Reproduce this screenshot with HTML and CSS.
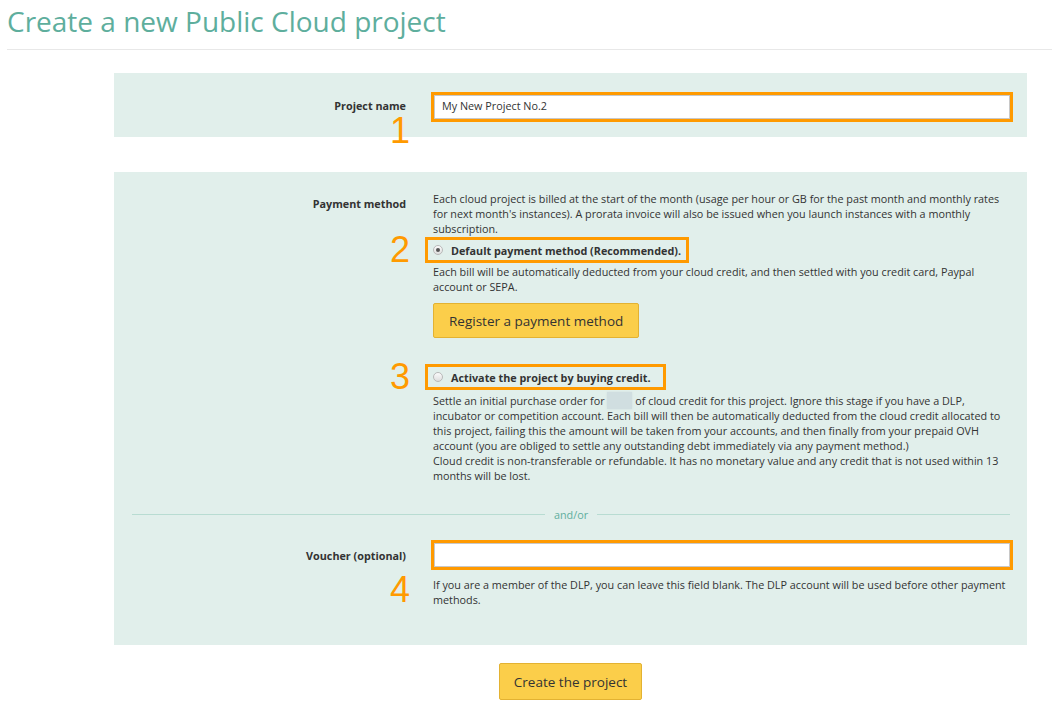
FILE: index.html
```html
<!DOCTYPE html>
<html lang="en">
<head>
<meta charset="utf-8">
<title>Create a new Public Cloud project</title>
<link rel="stylesheet" href="styles.css">
</head>
<body>
<div class="page">
  <h1 class="title">Create a new Public Cloud project</h1>
  <form class="form">
    <section class="panel panel-name">
      <div class="row row-name">
        <div class="label label-name">Project name<span class="step step-1">1</span></div>
        <div class="hl hl-input"><input class="input" type="text" value="My New Project No.2"></div>
      </div>
    </section>

    <section class="panel panel-pay">
      <div class="row">
        <div class="label label-pay">Payment method</div>
        <p class="text">Each cloud project is billed at the start of the month (usage per hour or GB for the past month and monthly rates for next month's instances). A prorata invoice will also be issued when you launch instances with a monthly subscription.</p>
      </div>

      <div class="row row-option">
        <div class="step">2</div>
        <label class="hl option"><span class="radio radio-on"></span>Default payment method (Recommended).</label>
      </div>

      <div class="row row-desc">
        <div class="col-2">
          <p class="text">Each bill will be automatically deducted from your cloud credit, and then settled with you credit card, Paypal account or SEPA.</p>
          <button type="button" class="btn btn-register">Register a payment method</button>
        </div>
      </div>

      <div class="row row-option row-option-3">
        <div class="step">3</div>
        <label class="hl option option-wide"><span class="radio"></span>Activate the project by buying credit.</label>
      </div>

      <div class="row row-desc2">
        <p class="text col-2">Settle an initial purchase order for <span class="redact"></span> of cloud credit for this project. Ignore this stage if you have a DLP, incubator or competition account. Each bill will then be automatically deducted from the cloud credit allocated to this project, failing this the amount will be taken from your accounts, and then finally from your prepaid OVH<br>account (you are obliged to settle any outstanding debt immediately via any payment method.)<br>Cloud credit is non-transferable or refundable. It has no monetary value and any credit that is not used within 13 months will be lost.</p>
      </div>

      <div class="separator"><span class="sep-line"></span><span class="sep-text">and/or</span><span class="sep-line"></span></div>

      <div class="row row-voucher">
        <div class="label">Voucher (optional)</div>
        <div class="hl hl-input"><input class="input" type="text" value=""></div>
      </div>

      <div class="row row-hint">
        <div class="step step-4">4</div>
        <p class="text">If you are a member of the DLP, you can leave this field blank. The DLP account will be used before other payment methods.</p>
      </div>
    </section>

    <div class="actions">
      <button type="button" class="btn btn-create">Create the project</button>
    </div>
  </form>
</div>
</body>
</html>
```

FILE: styles.css
```css
* { box-sizing: border-box; }

html, body {
  margin: 0;
  background: #ffffff;
}

body {
  font-family: "Open Sans", "Liberation Sans", Arial, sans-serif;
  color: #333333;
}

.page {
  padding-left: 7px;
}

.title {
  margin: 2px 0 0;
  padding-bottom: 9px;
  border-bottom: 1px solid #e8e8e8;
  font-size: 28px;
  line-height: 38px;
  font-weight: 400;
  color: #5eae9d;
}

.form {
  margin: 23px 25px 0 107px;
}

.panel {
  background: #e1efeb;
}

.panel-name {
  padding: 19px 15px 15px;
}

.panel-pay {
  margin-top: 35px;
  padding: 19px 15px 38px;
}

.row {
  display: grid;
  grid-template-columns: 277px 1fr;
  column-gap: 27px;
}

.col-2 {
  grid-column: 2;
}

.label {
  position: relative;
  font-size: 10.8px;
  line-height: 15px;
  font-weight: 700;
  text-align: right;
}

.row-name,
.row-voucher {
  align-items: center;
}

.label-name {
  margin-bottom: 4px;
}

.label-pay {
  padding-top: 5px;
}

.text {
  margin: 0;
  font-size: 10.8px;
  line-height: 15px;
}

.hl {
  border: 3px solid #ff9a00;
}

.hl-input {
  margin: 0 -1px 0 -2px;
}

.input {
  display: block;
  width: 100%;
  height: 24px;
  margin: 0;
  padding: 0 7px 3px;
  border: 1px solid #c8c8c8;
  border-radius: 0;
  background: #ffffff;
  font-family: "Open Sans", "Liberation Sans", Arial, sans-serif;
  font-size: 10.8px;
  color: #333333;
  outline: none;
}

.step {
  font-family: "Liberation Sans", Arial, sans-serif;
  font-size: 36px;
  line-height: 36px;
  font-weight: 400;
  color: #ff9a00;
  text-align: right;
  margin-right: -4px;
}

.step-1 {
  position: absolute;
  right: 0;
  top: 15px;
}

.row-option {
  margin-top: 1px;
  align-items: center;
}

.row-option .step {
  margin-top: -5px;
  margin-bottom: -5px;
}

.row-option-3 {
  margin-top: 26px;
}

.option {
  display: inline-flex;
  align-items: center;
  gap: 8px;
  justify-self: start;
  height: 26px;
  margin-left: -8px;
  padding: 0 5px;
  font-size: 10.8px;
  font-weight: 700;
}

.option-wide {
  padding-right: 12px;
}

.radio {
  position: relative;
  flex: none;
  width: 10px;
  height: 10px;
  border: 1px solid #b9b9b9;
  border-radius: 50%;
  background: linear-gradient(#fbfbfb, #dedede);
}

.radio-on::after {
  content: "";
  position: absolute;
  left: 2px;
  top: 2px;
  width: 4px;
  height: 4px;
  border-radius: 50%;
  background: #555555;
}

.row-desc {
  margin-top: 1px;
}

.row-desc2 {
  margin-top: 3px;
}

.redact {
  display: inline-block;
  width: 25px;
  height: 17px;
  margin: -1px 0;
  vertical-align: top;
  background: #d0dee0;
  box-shadow: 0 0 2px #d0dee0;
}

.btn {
  font-family: "Open Sans", "Liberation Sans", Arial, sans-serif;
  font-size: 13.5px;
  color: #333333;
  background: #fbce4a;
  border: 1px solid #e3b232;
  border-radius: 2px;
  padding: 0 14px;
  cursor: pointer;
}

.btn-register {
  display: block;
  height: 35px;
  margin-top: 9px;
  padding: 0 15px;
}

.separator {
  display: flex;
  align-items: center;
  gap: 9px;
  margin: 24px 2px 0 3px;
  font-size: 10.8px;
  line-height: 15px;
  color: #5eae9d;
}

.sep-line {
  flex: 1;
  height: 1px;
  background: #b8dcd2;
}

.row-voucher {
  margin-top: 18px;
}

.row-hint {
  margin-top: 7px;
}

.step-4 {
  align-self: start;
  margin-top: -5px;
  margin-bottom: -6px;
}

.actions {
  margin-top: 18px;
  text-align: center;
}

.btn-create {
  height: 37px;
}
```
